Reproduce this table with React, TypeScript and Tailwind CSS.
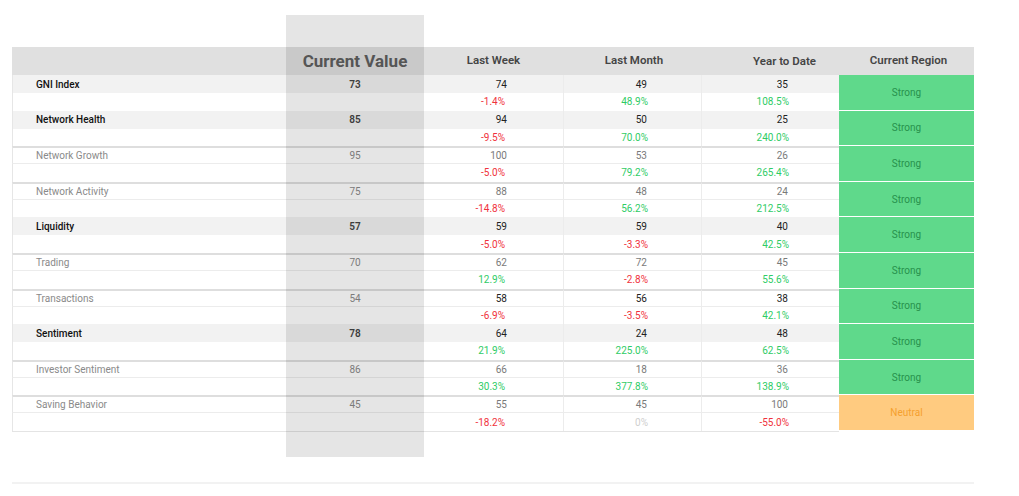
import React from "react";

type Row = {
  label: string;
  main?: boolean;
  dark?: boolean;
  cv: number;
  lw: number;
  lm: number;
  ytd: number;
  lwp: string;
  lmp: string;
  ytdp: string;
  region: "Strong" | "Neutral";
};

const rows: Row[] = [
  { label: "GNI Index", main: true, cv: 73, lw: 74, lm: 49, ytd: 35, lwp: "-1.4%", lmp: "48.9%", ytdp: "108.5%", region: "Strong" },
  { label: "Network Health", main: true, cv: 85, lw: 94, lm: 50, ytd: 25, lwp: "-9.5%", lmp: "70.0%", ytdp: "240.0%", region: "Strong" },
  { label: "Network Growth", cv: 95, lw: 100, lm: 53, ytd: 26, lwp: "-5.0%", lmp: "79.2%", ytdp: "265.4%", region: "Strong" },
  { label: "Network Activity", cv: 75, lw: 88, lm: 48, ytd: 24, lwp: "-14.8%", lmp: "56.2%", ytdp: "212.5%", region: "Strong" },
  { label: "Liquidity", main: true, cv: 57, lw: 59, lm: 59, ytd: 40, lwp: "-5.0%", lmp: "-3.3%", ytdp: "42.5%", region: "Strong" },
  { label: "Trading", cv: 70, lw: 62, lm: 72, ytd: 45, lwp: "12.9%", lmp: "-2.8%", ytdp: "55.6%", region: "Strong" },
  { label: "Transactions", dark: true, cv: 54, lw: 58, lm: 56, ytd: 38, lwp: "-6.9%", lmp: "-3.5%", ytdp: "42.1%", region: "Strong" },
  { label: "Sentiment", main: true, cv: 78, lw: 64, lm: 24, ytd: 48, lwp: "21.9%", lmp: "225.0%", ytdp: "62.5%", region: "Strong" },
  { label: "Investor Sentiment", cv: 86, lw: 66, lm: 18, ytd: 36, lwp: "30.3%", lmp: "377.8%", ytdp: "138.9%", region: "Strong" },
  { label: "Saving Behavior", cv: 45, lw: 55, lm: 45, ytd: 100, lwp: "-18.2%", lmp: "0%", ytdp: "-55.0%", region: "Neutral" },
];

function pctColor(p: string) {
  if (p === "0%") return "text-[#cfcfcf]";
  return p.startsWith("-") ? "text-[#f0323c]" : "text-[#2fcc66]";
}

function Group({ r }: { r: Row }) {
  // first sub-row: shaded for the main indices, top rule for the sub-metrics
  const top = r.main ? "bg-[#f2f2f2]" : "bg-white border-t-2 border-t-[#dedede] border-b border-b-[#ececec]";
  const valColor = r.main || r.dark ? "text-[#222]" : "text-[#7a7a7a]";
  return (
    <div className="grid grid-cols-[274px_138px_139px_138px_138px_135px] grid-rows-[18px_17.6px] text-[10px]">
      <div className={`${top} pl-[23px] flex items-center border-l border-l-[#e6e6e6] ${r.main ? "font-medium text-[#111]" : "text-[#8a8a8a]"}`}>
        {r.label}
      </div>
      <div className={`${top} flex items-center justify-center ${r.main ? "font-semibold text-[#444]" : "text-[#8a8a8a]"}`}>
        {r.cv}
      </div>
      <div className={`${top} flex items-center justify-end pr-[56px] ${valColor}`}>{r.lw}</div>
      <div className={`${top} flex items-center justify-end pr-[54px] border-l border-l-[#ececec] ${valColor}`}>{r.lm}</div>
      <div className={`${top} flex items-center justify-end pr-[51px] border-l border-l-[#ececec] ${valColor}`}>{r.ytd}</div>
      <div
        className={`row-span-2 flex items-center justify-center border-b border-white ${
          r.region === "Strong" ? "bg-[#5fd98b] text-[#27914b]" : "bg-[#ffcb80] text-[#f5a02e]"
        }`}
      >
        {r.region}
      </div>
      <div className="bg-white border-l border-[#e6e6e6]" />
      <div className="bg-white" />
      <div className={`bg-white flex items-center justify-end pr-[58px] ${pctColor(r.lwp)}`}>{r.lwp}</div>
      <div className={`bg-white flex items-center justify-end pr-[53px] border-l border-[#ececec] ${pctColor(r.lmp)}`}>{r.lmp}</div>
      <div className={`bg-white flex items-center justify-end pr-[50px] border-l border-[#ececec] ${pctColor(r.ytdp)}`}>{r.ytdp}</div>
    </div>
  );
}

export default function App() {
  return (
    <div className="relative w-[1019px] h-[496px] bg-white font-['Roboto',sans-serif] overflow-hidden">
      <div className="pt-[47px] pl-[12px] w-[974px]">
        {/* Header */}
        <div className="grid grid-cols-[274px_138px_139px_138px_138px_135px] h-[28px] bg-[#e0e0e0] text-[11.5px] font-semibold text-[#454545]">
          <div />
          <div className="flex items-center justify-center text-[17px] font-bold text-[#5f5f5f] pt-[1px]">Current Value</div>
          <div className="flex items-center justify-center">Last Week</div>
          <div className="flex items-center justify-center pl-[4px]">Last Month</div>
          <div className="flex items-center justify-center pl-[29px] pt-[2px]">Year to Date</div>
          <div className="flex items-center justify-center pl-[4px]">Current Region</div>
        </div>

        <div className="border-b border-[#e4e4e4] w-[827px]">
          {rows.map((r) => (
            <Group key={r.label} r={r} />
          ))}
        </div>

        <div className="mt-[50px] h-[2px] bg-[#f2f2f2]" />
      </div>

      {/* Highlighted column overlay */}
      <div className="pointer-events-none absolute left-[286px] top-[15px] w-[138px] h-[442px] bg-black/10" />
    </div>
  );
}
